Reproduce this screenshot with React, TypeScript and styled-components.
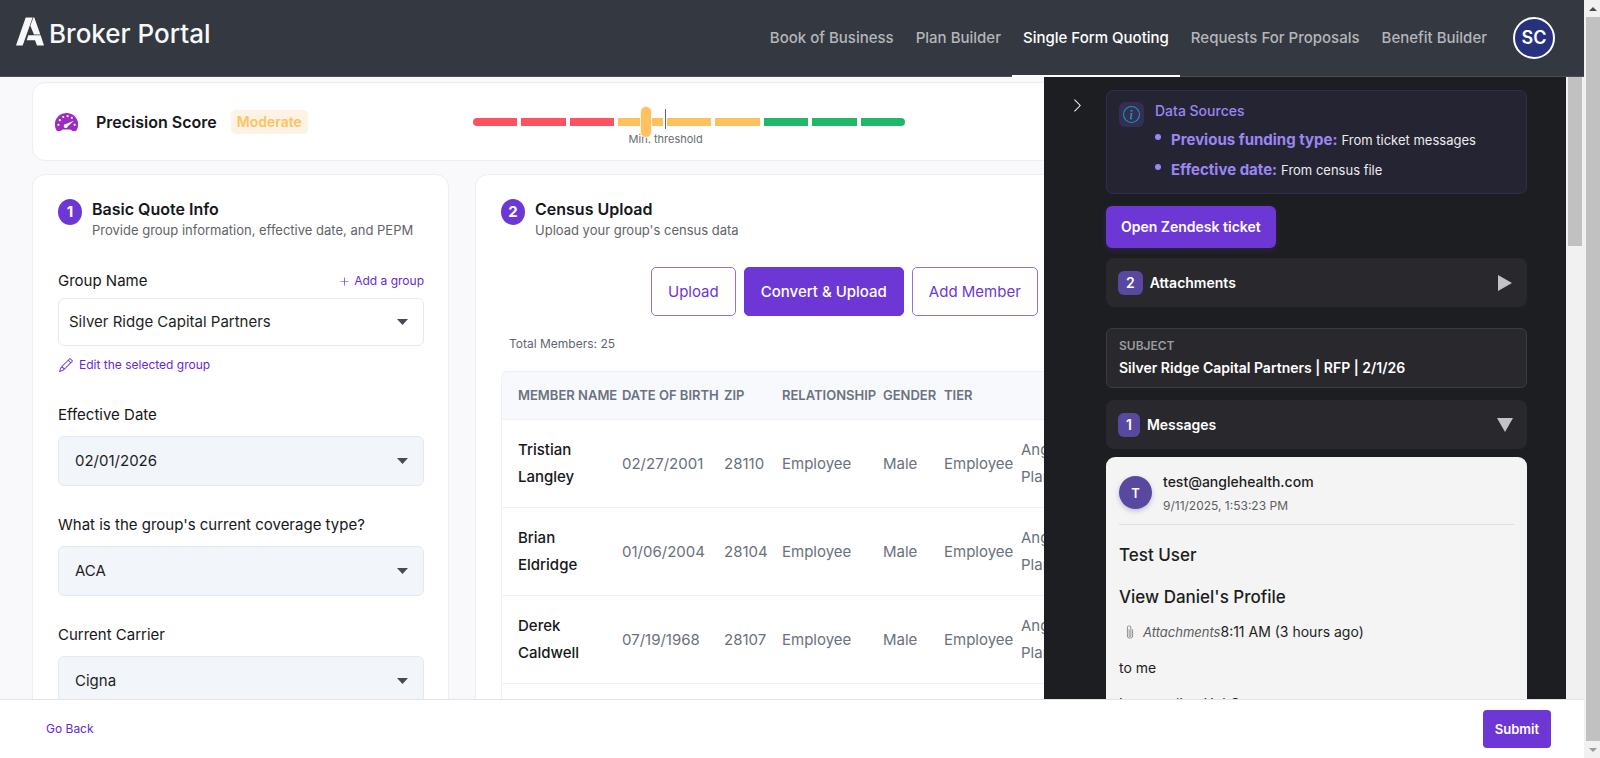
import React from "react";
import styled, { createGlobalStyle, css } from "styled-components";
import { BsChevronRight, BsInfoCircle, BsPaperclip, BsPencil, BsPlusLg } from "react-icons/bs";

const purple = "#6d37d6";

const GlobalStyle = createGlobalStyle`
  *, *::before, *::after { box-sizing: border-box; }
  body {
    margin: 0;
    font-family: Inter, "Liberation Sans", sans-serif;
    font-size: 15px;
    line-height: 20px;
    color: #15171a;
    background: #fff;
  }
  h1, h2, h3, p, ul { margin: 0; padding: 0; }
  button, select { font: inherit; cursor: pointer; }
  a { text-decoration: none; }
`;

/* ---------- frame ---------- */

const Shell = styled.div`
  display: flex;
  height: 100vh;
  overflow: hidden;
`;

const Page = styled.div`
  display: flex;
  flex-direction: column;
  flex: 1;
  min-width: 0;
`;

const Body = styled.div`
  display: flex;
  flex: 1;
  min-height: 0;
`;

const Viewport = styled.div`
  position: relative;
  flex: 1;
  min-width: 0;
  overflow: hidden;
  background: #f9f9fc;
`;

const Content = styled.main`
  display: flex;
  flex-direction: column;
  gap: 13px;
  padding: 5px 32px;
`;

const Columns = styled.div`
  display: grid;
  grid-template-columns: minmax(0, 417px) minmax(0, 1fr);
  align-items: start;
  gap: 26px;
`;

const PageScrollbar = styled.div`
  display: flex;
  flex-direction: column;
  width: 16px;
  padding-left: 2px;
  background: #f1f1f1;
`;

const ScrollArrow = styled.div`
  display: flex;
  align-items: center;
  justify-content: center;
  height: 17px;
`;

const PageThumb = styled.div`
  flex: 1;
  background: #c1c1c1;
`;

const InnerScrollbar = styled.div`
  width: 18px;
  padding: 0 2px;
  background: #f1f1f1;
`;

const InnerThumb = styled.div`
  height: 169px;
  background: #c1c1c1;
`;

/* ---------- header ---------- */

const Header = styled.header`
  display: flex;
  align-items: stretch;
  justify-content: space-between;
  height: 77px;
  padding: 0 29px 0 16px;
  background: #343840;
  border-bottom: 1px solid #4b4e56;
`;

const Brand = styled.a`
  display: flex;
  align-items: flex-start;
  gap: 5px;
  padding-top: 17px;
  color: #f7f8f9;
  font-size: 26px;
  font-weight: 500;
  line-height: 34px;
`;

const Nav = styled.nav`
  display: flex;
  align-items: center;
`;

const NavLink = styled.a<{ $active?: boolean }>`
  display: flex;
  align-items: center;
  align-self: stretch;
  margin-bottom: -1px;
  padding: 0 11px;
  border-bottom: 2px solid ${(p) => (p.$active ? "#fff" : "transparent")};
  color: ${(p) => (p.$active ? "#fff" : "#b4b6b9")};
  font-weight: 500;
  white-space: nowrap;
`;

const Avatar = styled.button`
  width: 42px;
  height: 42px;
  margin-left: 15px;
  padding: 0;
  border: 2px solid #fff;
  border-radius: 50%;
  background: #27327f;
  color: #fff;
  font-size: 18px;
  font-weight: 600;
`;

/* ---------- cards ---------- */

const Card = styled.section`
  padding: 24px 24px 26px 25px;
  border: 1px solid #ecedf6;
  border-radius: 13px;
  background: #fff;
`;

const ScoreCard = styled(Card)`
  display: flex;
  align-items: center;
  height: 79px;
  padding: 0 22px;
`;

const ScoreInfo = styled.div`
  display: flex;
  align-items: center;
  gap: 14px;
  flex: 0 0 418px;

  svg { margin-right: 4px; }
`;

const Title = styled.h2`
  font-size: 16px;
  font-weight: 600;
  line-height: 20px;
`;

const Tag = styled.span`
  padding: 2px 6px;
  border-radius: 5px;
  background: #fbf3e4;
  color: #ffc25f;
  font-size: 14px;
  font-weight: 600;
`;

const Scale = styled.div`
  position: relative;
  display: flex;
  flex: 0 1 432px;
  gap: 4px;
`;

const Segment = styled.span<{ $tone: string }>`
  flex: 1;
  height: 8px;
  background: ${(p) => p.$tone};

  &:first-child { border-radius: 4px 0 0 4px; }
  &:nth-child(9) { border-radius: 0 4px 4px 0; }
`;

const Threshold = styled.div`
  position: absolute;
  top: -9px;
  left: 44.6%;
  display: flex;
  flex-direction: column;
  align-items: center;
  gap: 4px;
  width: 0;
  color: #6a6c70;
  font-size: 11px;
  line-height: 12px;
  white-space: nowrap;

  &::before {
    content: "";
    width: 1px;
    height: 20px;
    background: #666;
  }
`;

const Knob = styled.span`
  position: absolute;
  top: -12px;
  left: 38.7%;
  width: 12px;
  height: 32px;
  border: 1px solid #fff3dd;
  border-radius: 6px;
  background: #ffc160;
`;

const SectionHead = styled.header`
  display: flex;
  gap: 10px;
  margin-bottom: 28px;
`;

const StepBadge = styled.span`
  display: flex;
  align-items: center;
  justify-content: center;
  width: 24px;
  height: 26px;
  border-radius: 50%;
  background: ${purple};
  color: #fff;
  font-size: 15px;
  font-weight: 700;
`;

const Subtitle = styled.p`
  color: #626468;
  font-size: 13px;
  line-height: 22px;
  height: 20px;
`;

/* ---------- form ---------- */

const Field = styled.div`
  display: flex;
  flex-direction: column;
  margin-bottom: 25px;
`;

const FieldTop = styled.div<{ $tight?: boolean }>`
  display: flex;
  align-items: flex-end;
  justify-content: space-between;
  height: 24px;
  margin-bottom: ${(p) => (p.$tight ? 7 : 11)}px;
`;

const SelectWrap = styled.div<{ $filled?: boolean }>`
  display: grid;
  align-items: center;
  height: ${(p) => (p.$filled ? 50 : 48)}px;
  border: 1px solid ${(p) => (p.$filled ? "#e4e8f0" : "#e8e8f3")};
  border-radius: 6px;
  background: ${(p) => (p.$filled ? "#f2f5fa" : "#fff")};

  select, svg { grid-area: 1 / 1; }
  svg {
    justify-self: end;
    margin-right: 15px;
    pointer-events: none;
  }
`;

const Select = styled.select<{ $inset: number }>`
  width: 100%;
  height: 100%;
  padding: 0 40px 0 ${(p) => p.$inset}px;
  border: 0;
  border-radius: 6px;
  background: transparent;
  color: #1c1f23;
  appearance: none;
`;

const LinkButton = styled.button`
  display: inline-flex;
  align-items: center;
  gap: 4px;
  padding: 0;
  border: 0;
  background: none;
  color: #6528d8;
  font-size: 12px;
  line-height: 20px;
`;

const EditLink = styled(LinkButton)`
  align-self: flex-start;
  gap: 6px;
  margin: 9px 0 1px;
  padding-left: 1px;
`;

/* ---------- census ---------- */

const Actions = styled.div`
  display: flex;
  gap: 8px;
  margin-bottom: 18px;
  padding-left: 150px;
`;

const ActionButton = styled.button<{ $primary?: boolean }>`
  height: 49px;
  padding: 0 16px;
  border: 1px solid ${(p) => (p.$primary ? purple : "#9470e2")};
  border-radius: 5px;
  background: ${(p) => (p.$primary ? purple : "#fff")};
  color: ${(p) => (p.$primary ? "#fff" : purple)};
  font-weight: ${(p) => (p.$primary ? 500 : 400)};
  white-space: nowrap;
`;

const Total = styled.p`
  margin-bottom: 17px;
  padding-left: 8px;
  color: #5f6670;
  font-size: 12px;
`;

const TableFrame = styled.div`
  overflow: hidden;
  border: 1px solid #eeeff8;
  border-radius: 6px;
`;

const Table = styled.table`
  width: 100%;
  border-collapse: collapse;
  table-layout: fixed;
  text-align: left;
`;

const Col = styled.col<{ $w?: number }>`
  width: ${(p) => (p.$w ? `${p.$w}px` : "auto")};
`;

const cell = css`
  padding: 0 8px 0 0;
  border-bottom: 1px solid #eeeff8;
  &:first-child { padding-left: 16px; }
`;

const Th = styled.th`
  ${cell}
  height: 47px;
  padding-right: 0;
  background: #f8f9fd;
  color: #6b7280;
  font-size: 13px;
  font-weight: 600;
  white-space: nowrap;
`;

const Td = styled.td<{ $name?: boolean }>`
  ${cell}
  height: 88px;
  color: ${(p) => (p.$name ? "#15171a" : "#69717b")};
  font-weight: ${(p) => (p.$name ? 500 : 400)};
  line-height: 27px;
`;

const PlanText = styled.span`
  display: block;
  width: 60px;
`;

/* ---------- ticket drawer ---------- */

const Drawer = styled.aside`
  position: absolute;
  top: 0;
  right: 0;
  bottom: 0;
  display: flex;
  width: 522px;
  max-width: 100%;
  padding: 13px 39px 0 0;
  background: #1d1e22;
  color: #fff;
`;

const Rail = styled.div`
  flex: 0 0 62px;
  padding: 8px 0 0 26px;
`;

const CollapseButton = styled.button`
  display: flex;
  padding: 0;
  border: 0;
  background: none;
  color: #fff;
`;

const DrawerBody = styled.div`
  display: flex;
  flex-direction: column;
  flex: 1;
  min-width: 0;

  > * { flex-shrink: 0; }
`;

const Sources = styled.section`
  display: flex;
  gap: 11px;
  padding: 10px 12px 8px;
  border: 1px solid #322c55;
  border-radius: 7px;
  background: #252432;
`;

const SourceIcon = styled.span`
  display: flex;
  align-items: center;
  justify-content: center;
  width: 25px;
  height: 25px;
  margin-top: 1px;
  border-radius: 6px;
  background: #332e54;
  color: #2397ad;
`;

const SourceTitle = styled.h3`
  margin-bottom: 4px;
  color: #9b86f5;
  font-size: 14px;
  font-weight: 500;
  line-height: 20px;
`;

const SourceList = styled.ul`
  list-style: none;
`;

const SourceItem = styled.li`
  display: flex;
  align-items: baseline;
  gap: 4px;
  color: #ececf0;
  font-size: 13px;
  line-height: 29px;

  strong {
    color: #9b86f5;
    font-size: 15px;
    font-weight: 700;
  }
  &::before {
    content: "";
    align-self: flex-start;
    width: 6px;
    height: 6px;
    margin: 9px 6px 0 0;
    border-radius: 50%;
    background: #9b86f5;
  }
`;

const TicketButton = styled.button`
  align-self: flex-start;
  height: 42px;
  margin: 12px 0 10px;
  padding: 0 15px;
  border: 0;
  border-radius: 6px;
  background: ${purple};
  box-shadow: 0 2px 6px #6d37d633;
  color: #fff;
  font-size: 14px;
  font-weight: 600;
`;

const Accordion = styled.button`
  display: flex;
  align-items: center;
  gap: 7px;
  height: 49px;
  padding: 0 14px 0 12px;
  border: 0;
  border-radius: 8px;
  background: #29292d;
  color: #fff;
  font-size: 14px;
  font-weight: 600;

  svg { margin-left: auto; }
`;

const Count = styled.span`
  padding: 2px 8px;
  border-radius: 6px;
  background: #5948a0;
`;

const Subject = styled.section`
  margin: 21px 0 12px;
  padding: 7px 12px;
  border: 1px solid #3b3b40;
  border-radius: 6px;
  background: #29282d;
  font-size: 14px;
  font-weight: 600;
  line-height: 24px;

  h3 {
    color: #9b9b9f;
    font-size: 12px;
    font-weight: 600;
    line-height: 20px;
  }
`;

const Message = styled.article`
  margin-top: 8px;
  padding: 12px 13px;
  border-radius: 9px 9px 0 0;
  background: #f4f4f4;
  color: #1c1e21;
`;

const MessageHead = styled.header`
  display: flex;
  align-items: center;
  gap: 11px;
  height: 56px;
  margin-bottom: 18px;
  padding-bottom: 6px;
  border-bottom: 1px solid #dededf;
`;

const SenderBadge = styled.span`
  display: flex;
  align-items: center;
  justify-content: center;
  width: 33px;
  height: 33px;
  margin-bottom: 2px;
  border-radius: 50%;
  background: #5948a0;
  box-shadow: 0 2px 5px #5948a055;
  color: #fff;
  font-size: 13px;
  font-weight: 600;
`;

const Sender = styled.div`
  font-size: 14px;
  font-weight: 500;
  line-height: 24px;

  time {
    display: block;
    color: #5c5e62;
    font-size: 12px;
    font-weight: 400;
  }
`;

const Heading = styled.h3`
  margin-bottom: 18px;
  font-size: 17px;
  font-weight: 500;
  line-height: 24px;
`;

const MessageLine = styled.p`
  display: flex;
  align-items: center;
  margin-bottom: 16px;
  font-size: 14px;

  &:nth-of-type(1) { margin-top: -5px; }
  svg { margin: 0 6px 0 4px; color: #85868a; }
  em { color: #5a5c60; font-size: 13px; }
`;

/* ---------- footer ---------- */

const Footer = styled.footer`
  display: flex;
  align-items: center;
  justify-content: space-between;
  height: 59px;
  padding: 0 33px 0 46px;
  border-top: 1px solid #e4e4e6;
  background: #fff;
`;

const BackLink = styled.a`
  color: #6528d8;
  font-size: 12px;
`;

const SubmitButton = styled.button`
  height: 38px;
  padding: 0 12px;
  border: 0;
  border-radius: 4px;
  background: ${purple};
  color: #fff;
  font-size: 13px;
  font-weight: 600;
`;

/* ---------- drawings ---------- */

const Logo = () => (
  <svg width="28" height="29" viewBox="0 0 84 86" fill="currentColor" aria-hidden="true">
    <path d="M29 1H50L20 85H0Z" />
    <path d="M52 1H55L73 52H54L43 26Z" />
    <path d="M37 54H74L84 85H63L57 69H32Z" />
  </svg>
);

const Gauge = () => (
  <svg width="23" height="18" viewBox="0 0 23 18" aria-hidden="true">
    <path d="M11.500 0A11.500 11.500 0 0 0 1.600 17.500Q2 18 3 18H5.500Q6.800 16.500 8 16.500H15Q16.200 16.500 17.500 18H20Q21 18 21.400 17.500A11.500 11.500 0 0 0 11.500 0Z" fill="#9a2cc0" />
    <g fill="#fff">
      <circle cx="3.400" cy="11.800" r="1.100" />
      <circle cx="4.800" cy="7.200" r="1.100" />
      <circle cx="8.200" cy="4" r="1.100" />
      <circle cx="12.600" cy="3.200" r="1.100" />
      <circle cx="16.800" cy="4.800" r="1.100" />
      <circle cx="19.700" cy="11.800" r="1.100" />
      <path d="M19 7.800L12.700 13.400A2 2 0 1 1 10.800 11.100Z" />
    </g>
  </svg>
);

const Caret = () => (
  <svg width="11" height="6" viewBox="0 0 11 6" aria-hidden="true">
    <path d="M0 0H11L5.500 6Z" fill="#454b54" />
  </svg>
);

const Arrow = ({ open }: { open?: boolean }) => (
  <svg width="16" height="16" viewBox="0 0 16 16" aria-hidden="true">
    <path d={open ? "M0 1H16L8 15Z" : "M1 0L15 8L1 16Z"} fill="#c3c3c5" />
  </svg>
);

/* ---------- data ---------- */

const tones = ["#fd5260", "#fd5260", "#fd5260", "#ffc160", "#ffc160", "#ffc160", "#1fb865", "#1fb865", "#1fb865"];

const navItems = ["Book of Business", "Plan Builder", "Single Form Quoting", "Requests For Proposals", "Benefit Builder"];

const fields = [
  { id: "effective", label: "Effective Date", value: "02/01/2026" },
  { id: "coverage", label: "What is the group's current coverage type?", value: "ACA" },
  { id: "carrier", label: "Current Carrier", value: "Cigna" },
];

const columns = ["Member Name", "Date of Birth", "Zip", "Relationship", "Gender", "Tier", ""];
const widths = [120, 102, 58, 101, 61, 77];

const members = [
  ["Tristian Langley", "02/27/2001", "28110"],
  ["Brian Eldridge", "01/06/2004", "28104"],
  ["Derek Caldwell", "07/19/1968", "28107"],
];

export default function App() {
  return (
    <Shell>
      <GlobalStyle />
      <Page>
        <Header>
          <Brand href="#">
            <Logo />
            Broker Portal
          </Brand>
          <Nav>
            {navItems.map((item) => (
              <NavLink key={item} href="#" $active={item === "Single Form Quoting"}>{item}</NavLink>
            ))}
            <Avatar>SC</Avatar>
          </Nav>
        </Header>

        <Body>
          <Viewport>
            <Content>
              <ScoreCard>
                <ScoreInfo>
                  <Gauge />
                  <Title>Precision Score</Title>
                  <Tag>Moderate</Tag>
                </ScoreInfo>
                <Scale>
                  {tones.map((tone, i) => <Segment key={i} $tone={tone} />)}
                  <Threshold>Min. threshold</Threshold>
                  <Knob />
                </Scale>
              </ScoreCard>

              <Columns>
                <Card>
                  <SectionHead>
                    <StepBadge>1</StepBadge>
                    <div>
                      <Title>Basic Quote Info</Title>
                      <Subtitle>Provide group information, effective date, and PEPM</Subtitle>
                    </div>
                  </SectionHead>
                  <Field>
                    <FieldTop $tight>
                      <label htmlFor="group">Group Name</label>
                      <LinkButton><BsPlusLg size={11} />Add a group</LinkButton>
                    </FieldTop>
                    <SelectWrap>
                      <Select id="group" $inset={10}><option>Silver Ridge Capital Partners</option></Select>
                      <Caret />
                    </SelectWrap>
                    <EditLink><BsPencil size={14} />Edit the selected group</EditLink>
                  </Field>
                  {fields.map((f) => (
                    <Field key={f.id}>
                      <FieldTop><label htmlFor={f.id}>{f.label}</label></FieldTop>
                      <SelectWrap $filled>
                        <Select id={f.id} $inset={16}><option>{f.value}</option></Select>
                        <Caret />
                      </SelectWrap>
                    </Field>
                  ))}
                </Card>

                <Card>
                  <SectionHead>
                    <StepBadge>2</StepBadge>
                    <div>
                      <Title>Census Upload</Title>
                      <Subtitle>Upload your group's census data</Subtitle>
                    </div>
                  </SectionHead>
                  <Actions>
                    <ActionButton>Upload</ActionButton>
                    <ActionButton $primary>Convert &amp; Upload</ActionButton>
                    <ActionButton>Add Member</ActionButton>
                  </Actions>
                  <Total>Total Members: 25</Total>
                  <TableFrame>
                    <Table>
                      <colgroup>
                        {columns.map((c, i) => <Col key={c} $w={widths[i]} />)}
                      </colgroup>
                      <thead>
                        <tr>{columns.map((c) => <Th key={c} scope="col">{c.toUpperCase()}</Th>)}</tr>
                      </thead>
                      <tbody>
                        {members.map(([name, born, zip]) => (
                          <tr key={name}>
                            <Td $name>{name}</Td>
                            <Td>{born}</Td>
                            <Td>{zip}</Td>
                            <Td>Employee</Td>
                            <Td>Male</Td>
                            <Td>Employee</Td>
                            <Td><PlanText>Angle Plan</PlanText></Td>
                          </tr>
                        ))}
                        <tr><Td colSpan={7} /></tr>
                      </tbody>
                    </Table>
                  </TableFrame>
                </Card>
              </Columns>
            </Content>

            <Drawer>
              <Rail>
                <CollapseButton aria-label="Collapse panel"><BsChevronRight size={15} /></CollapseButton>
              </Rail>
              <DrawerBody>
                <Sources>
                  <SourceIcon><BsInfoCircle size={17} /></SourceIcon>
                  <div>
                    <SourceTitle>Data Sources</SourceTitle>
                    <SourceList>
                      <SourceItem><strong>Previous funding type:</strong> From ticket messages</SourceItem>
                      <SourceItem><strong>Effective date:</strong> From census file</SourceItem>
                    </SourceList>
                  </div>
                </Sources>
                <TicketButton>Open Zendesk ticket</TicketButton>
                <Accordion aria-expanded={false}><Count>2</Count>Attachments<Arrow /></Accordion>
                <Subject>
                  <h3>SUBJECT</h3>
                  <p>Silver Ridge Capital Partners | RFP | 2/1/26</p>
                </Subject>
                <Accordion aria-expanded><Count>1</Count>Messages<Arrow open /></Accordion>
                <Message>
                  <MessageHead>
                    <SenderBadge>T</SenderBadge>
                    <Sender>
                      test@anglehealth.com
                      <time>9/11/2025, 1:53:23 PM</time>
                    </Sender>
                  </MessageHead>
                  <Heading>Test User</Heading>
                  <Heading>View Daniel's Profile</Heading>
                  <MessageLine><BsPaperclip size={14} /><em>Attachments</em>8:11 AM (3 hours ago)</MessageLine>
                  <MessageLine>to me</MessageLine>
                  <MessageLine>Log email to HubSpot</MessageLine>
                </Message>
              </DrawerBody>
            </Drawer>
          </Viewport>
          <InnerScrollbar><InnerThumb /></InnerScrollbar>
        </Body>

        <Footer>
          <BackLink href="#">Go Back</BackLink>
          <SubmitButton>Submit</SubmitButton>
        </Footer>
      </Page>
      <PageScrollbar>
        <ScrollArrow>
          <svg width="8" height="4" viewBox="0 0 8 4" aria-hidden="true"><path d="M0 4L4 0L8 4Z" fill="#4a4a4a" /></svg>
        </ScrollArrow>
        <PageThumb />
        <ScrollArrow>
          <svg width="8" height="4" viewBox="0 0 8 4" aria-hidden="true"><path d="M0 0H8L4 4Z" fill="#9a9a9a" /></svg>
        </ScrollArrow>
      </PageScrollbar>
    </Shell>
  );
}
